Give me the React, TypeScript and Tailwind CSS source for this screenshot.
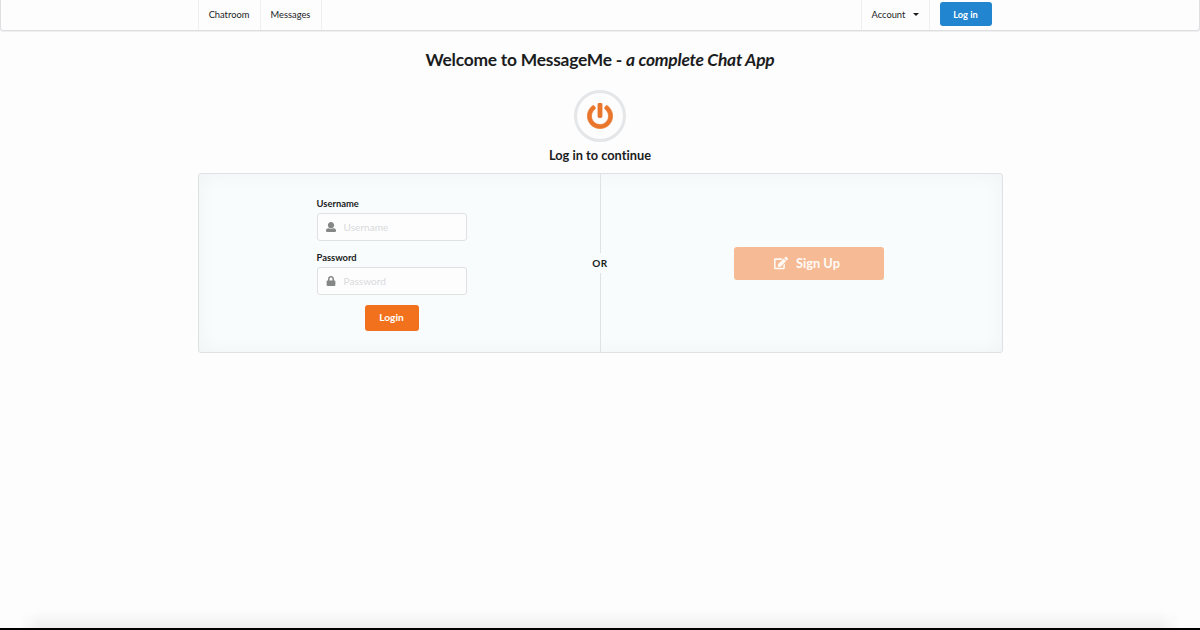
import { FaEdit, FaLock, FaPowerOff } from 'react-icons/fa';

function UserIcon() {
  return (
    <svg viewBox="0 0 512 512" className="size-[10px]" fill="currentColor">
      <path d="M256 0c88.366 0 160 71.634 160 160s-71.634 160-160 160S96 248.366 96 160 167.634 0 256 0zm183.283 333.821l-71.313-17.828c-74.923 53.89-165.738 41.864-223.94 0l-71.313 17.828C29.981 344.505 0 382.903 0 426.955V464c0 26.51 21.49 48 48 48h416c26.51 0 48-21.49 48-48v-37.045c0-44.052-29.981-82.45-72.717-93.134z" />
    </svg>
  );
}

function Field({ label, type, icon }: { label: string; type: string; icon: React.ReactNode }) {
  return (
    <label className="block w-[150px]">
      <span className="block h-[15px] text-[9.4px] leading-[15px] font-bold">{label}</span>
      <span className="mt-[2px] flex h-7 items-center rounded-[3px] border border-[#dfe1e2] bg-[#fdfdfe] pl-[8px]">
        <span className="flex w-[11px] justify-center text-[#858686]">{icon}</span>
        <input
          type={type}
          placeholder={label}
          className="ml-[7px] h-full w-[110px] bg-transparent text-[10.1px] outline-none placeholder:text-[#d9dadb]"
        />
      </span>
    </label>
  );
}

export default function App() {
  return (
    <div className="flex h-[630px] flex-col overflow-hidden bg-[#fdfdfe] font-['Lato',sans-serif] text-[#1b1c1d] [font-variant-ligatures:none]">
      <nav className="h-[31px] shrink-0 rounded-b-[3px] border-x border-b border-[#dedfe0] text-[9.3px] shadow-[0_1px_1px_rgba(34,36,38,0.07)]">
        <div className="mx-auto flex h-[30px] w-[805px] border-l border-[#efeff0]">
          <a className="flex w-[62px] items-center justify-center border-r border-[#efeff0] pb-px">Chatroom</a>
          <a className="flex w-[61px] items-center justify-center border-r border-[#efeff0] pb-px">Messages</a>
          <a className="ml-auto flex w-[69px] items-center border-x border-[#efeff0] pb-px pl-[10px]">
            Account
            <span className="ml-[8px] border-x-[3px] border-t-[3px] border-x-transparent border-t-[#1b1c1d]" />
          </a>
          <div className="w-[73px] pt-[2px] pl-[10px]">
            <button className="h-6 w-[52px] rounded-[3px] bg-[#2185d0] pt-px text-[9.3px] font-bold text-white">Log in</button>
          </div>
        </div>
      </nav>

      <main className="flex flex-1 flex-col items-center">
        <h1 className="mt-[17px] h-6 text-[17.4px] leading-6 font-bold tracking-[-0.23px] whitespace-nowrap">
          Welcome to MessageMe - <em>a complete Chat App</em>
        </h1>
        <div className="mt-[18px] flex size-[52px] items-center justify-center rounded-full border-[3px] border-[#e4e6e8] text-[#e9762b]">
          <FaPowerOff className="size-[26px]" stroke="currentColor" strokeWidth={14} />
        </div>
        <h2 className="mt-[5px] h-4 text-[12.8px] leading-4 font-bold">Log in to continue</h2>

        <section className="mt-[10px] flex h-[180px] w-[805px] rounded-[3px] border border-[#dfe1e2] bg-[#f8fcfc] shadow-[inset_0_0_20px_rgba(34,36,38,0.04)]">
          <form className="flex w-[394px] shrink-0 flex-col items-center pt-[22px] pr-[8px]">
            <Field label="Username" type="text" icon={<UserIcon />} />
            <div className="h-[9px]" />
            <Field label="Password" type="password" icon={<FaLock className="size-[10px]" />} />
            <button type="button" className="mt-[10px] h-[26px] w-[54px] rounded-[3px] bg-[#f2711c] text-[10.2px] font-bold text-white">
              Login
            </button>
          </form>
          <div className="flex w-[15px] shrink-0 flex-col items-center text-[10px] font-bold">
            <span className="w-px flex-1 bg-[#dfe3e4]" />
            <span className="flex h-5 items-center tracking-[0.5px]">OR</span>
            <span className="w-px flex-1 bg-[#dfe3e4]" />
          </div>
          <div className="flex w-[394px] items-center justify-center pl-[8px]">
            <button className="flex h-[33px] w-[150px] items-center justify-center gap-[8px] rounded-[3px] bg-[#f6bb95] pr-[3px] text-[12.8px] font-bold text-[#fffaf6]">
              <FaEdit className="size-[14px]" />
              <span className="pt-px">Sign Up</span>
            </button>
          </div>
        </section>
      </main>

      <footer className="shrink-0">
        <div className="mx-[20px] h-[18px] bg-gradient-to-b from-[#fdfdfe] to-[#efeff0] [mask-image:linear-gradient(to_right,transparent,black_20px,black_calc(100%-20px),transparent)]" />
        <div className="h-[2px] bg-black" />
      </footer>
    </div>
  );
}
